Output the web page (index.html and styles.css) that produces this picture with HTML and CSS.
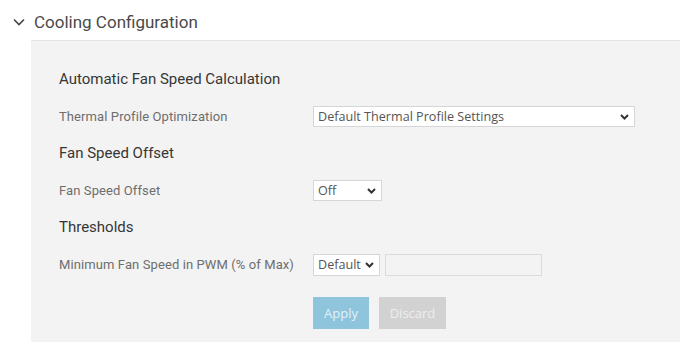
FILE: index.html
```html
<!DOCTYPE html>
<html>
<head>
    <link rel="stylesheet" href="styles.css">
</head>
<body>

<div class="section-title">
    <svg class="caret" width="12" height="8" viewBox="0 0 12 8">
        <path d="M1 1.5 L6 6.5 L11 1.5" fill="none" stroke="#444" stroke-width="1.6"/>
    </svg>
    <span>Cooling Configuration</span>
</div>

<div class="panel">
    <h4 class="group-title">Automatic Fan Speed Calculation</h4>
    <div class="row">
        <label class="row-label">Thermal Profile Optimization</label>
        <div class="select-wrap wide">
            <select class="field">
                <option>Default Thermal Profile Settings</option>
            </select>
            <svg class="arrow" width="9" height="6" viewBox="0 0 9 6"><path d="M1 1 L4.5 4.5 L8 1" fill="none" stroke="#333" stroke-width="2"/></svg>
        </div>
    </div>

    <h4 class="group-title">Fan Speed Offset</h4>
    <div class="row">
        <label class="row-label">Fan Speed Offset</label>
        <div class="select-wrap off">
            <select class="field">
                <option>Off</option>
            </select>
            <svg class="arrow" width="9" height="6" viewBox="0 0 9 6"><path d="M1 1 L4.5 4.5 L8 1" fill="none" stroke="#333" stroke-width="2"/></svg>
        </div>
    </div>

    <h4 class="group-title">Thresholds</h4>
    <div class="row">
        <label class="row-label">Minimum Fan Speed in PWM (% of Max)</label>
        <div class="select-wrap def">
            <select class="field">
                <option>Default</option>
            </select>
            <svg class="arrow" width="9" height="6" viewBox="0 0 9 6"><path d="M1 1 L4.5 4.5 L8 1" fill="none" stroke="#333" stroke-width="2"/></svg>
        </div>
        <input class="text-field" type="text" disabled>
    </div>

    <div class="actions">
        <button class="btn btn-apply">Apply</button>
        <button class="btn btn-discard">Discard</button>
    </div>
</div>

</body>
</html>
```

FILE: styles.css
```css
body {
    margin: 0;
    background-color: #fff;
    font-family: Roboto, "Liberation Sans", sans-serif;
    width: 680px;
    height: 348px;
    overflow: hidden;
}
.section-title {
    height: 40px;
    display: flex;
    align-items: center;
    padding-left: 13px;
    font-size: 17px;
    color: #4a4a4a;
    padding-top: 3px;
    box-sizing: border-box;
}
.caret {
    margin-right: 9px;
    margin-top: 1px;
}
.panel {
    margin-left: 31px;
    background-color: #f3f3f3;
    border-top: 1px solid #e4e4e4;
    padding: 20px 0 13px 28px;
}
.group-title {
    margin: 0;
    height: 37px;
    line-height: 37px;
    font-size: 15px;
    font-weight: normal;
    color: #363636;
}
.row {
    height: 37px;
    display: flex;
    align-items: center;
}
.row-label {
    width: 254px;
    font-size: 13px;
    color: #6e6e6e;
    letter-spacing: 0.1px;
}
.select-wrap {
    position: relative;
    height: 21px;
}
.select-wrap.wide { width: 322px; }
.select-wrap.off { width: 69px; }
.select-wrap.def { width: 67px; height: 22px; }
.field {
    appearance: none;
    -webkit-appearance: none;
    width: 100%;
    height: 100%;
    margin: 0;
    border: 1px solid #d6d6d6;
    border-radius: 0;
    background-color: #fff;
    font-family: "Open Sans", Roboto, sans-serif;
    font-size: 12.6px;
    color: #555;
    padding: 0 0 0 4px;
}
.arrow {
    position: absolute;
    right: 6px;
    top: 8px;
    pointer-events: none;
}
.text-field {
    margin-left: 5px;
    width: 157px;
    height: 22px;
    box-sizing: border-box;
    border: 1px solid #dcdcdc;
    background-color: #f3f3f3;
}
.actions {
    display: flex;
    padding-left: 254px;
    margin-top: 14px;
}
.btn {
    height: 32px;
    border: none;
    border-radius: 0;
    font-family: "Open Sans", Roboto, sans-serif;
    font-size: 13px;
    padding: 0;
}
.btn-apply {
    width: 56px;
    background-color: #8ec4dc;
    color: #e2f1f8;
}
.btn-discard {
    width: 67px;
    margin-left: 10px;
    background-color: #d2d2d2;
    color: #eeeeee;
}
```
